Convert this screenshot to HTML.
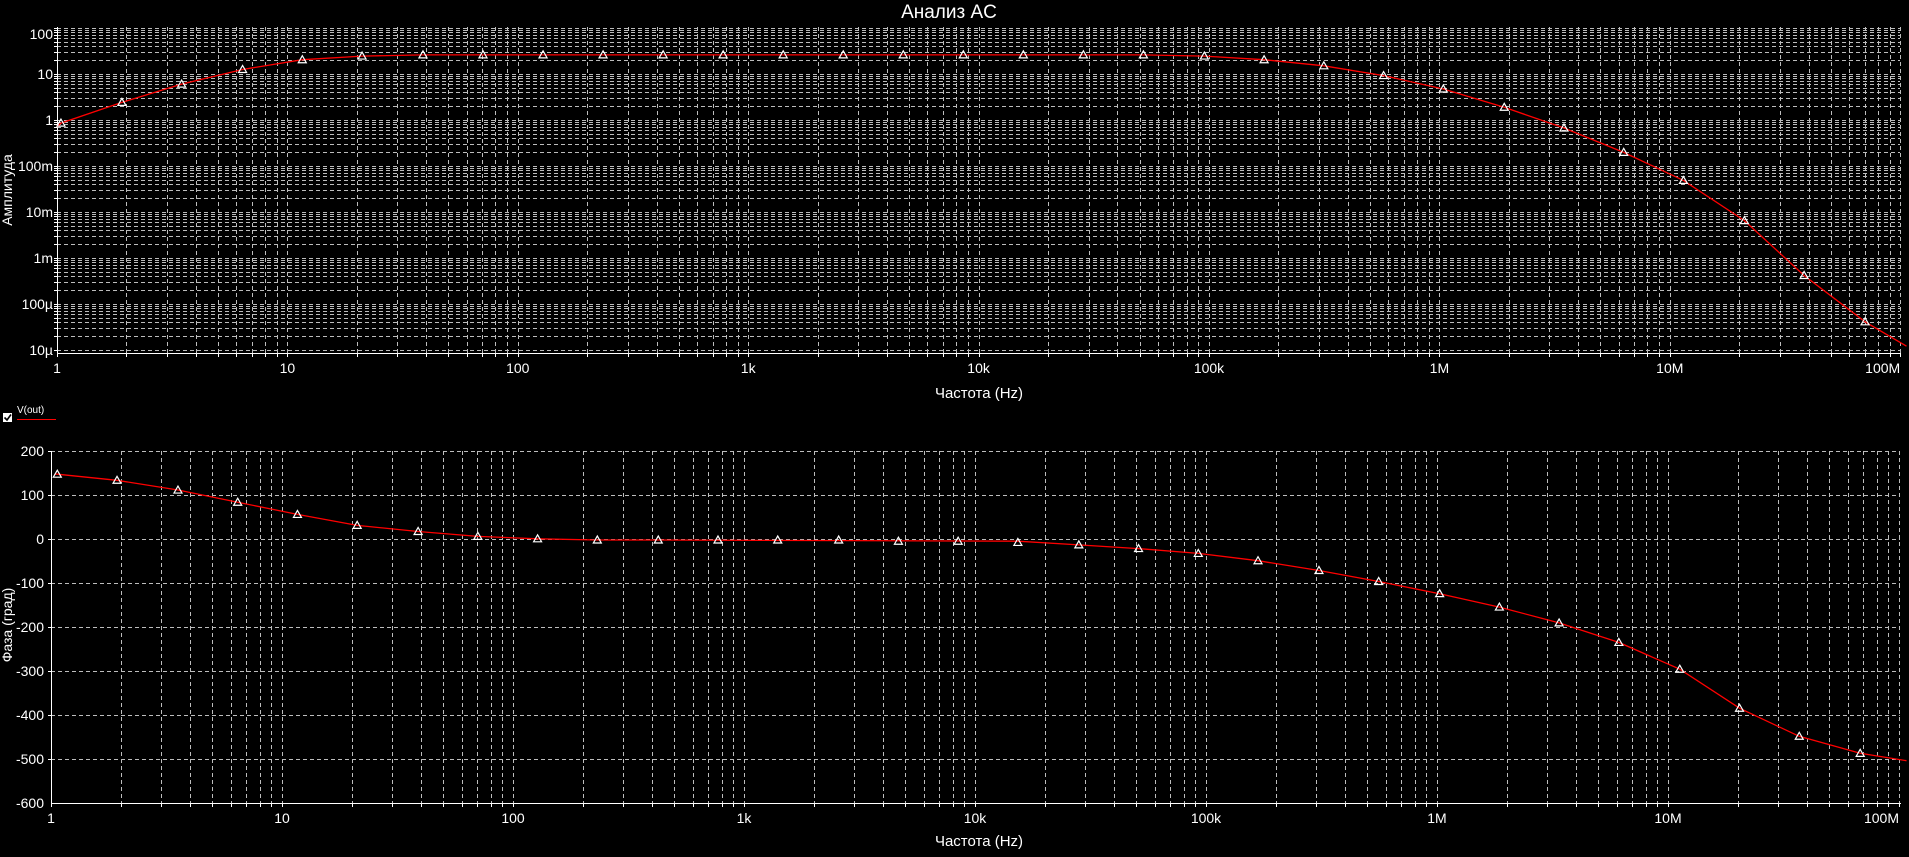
<!DOCTYPE html>
<html><head><meta charset="utf-8"><style>
html,body{margin:0;padding:0;background:#000;width:1909px;height:857px;overflow:hidden}
svg{display:block}
text{font-family:"Liberation Sans","DejaVu Sans",sans-serif;fill:#fff}
</style></head><body>
<svg id="s" width="1909" height="857" xmlns="http://www.w3.org/2000/svg">
<text x="949" y="18" font-size="19" text-anchor="middle">Анализ AC</text>
<text x="0" y="0" font-size="14" text-anchor="middle" transform="translate(12,190) rotate(-90)">Амплитуда</text>
<text x="0" y="0" font-size="14" text-anchor="middle" transform="translate(12,625) rotate(-90)">Фаза (град)</text>
<text x="979" y="398" font-size="15" text-anchor="middle">Частота (Hz)</text>
<text x="979" y="846" font-size="15" text-anchor="middle">Частота (Hz)</text>
<rect x="3" y="413" width="9" height="9" fill="#fff"/>
<path d="M4.5 417.5 L7 420 L11 414.5" stroke="#000" stroke-width="1.6" fill="none"/>
<text x="17" y="413" font-size="10">V(out)</text>
<line x1="17" y1="419.5" x2="56" y2="419.5" stroke="#f00" stroke-width="1"/>
<g id="g"></g>
</svg>
<script>
(function(){
var g=document.getElementById('g'),h='';
function L(x1,y1,x2,y2,c,d){h+='<line x1="'+x1+'" y1="'+y1+'" x2="'+x2+'" y2="'+y2+'" stroke="'+c+'" stroke-width="1"'+(d?' stroke-dasharray="4,3"':'')+'/>';}
function T(x,y,s,a,fs){h+='<text x="'+x+'" y="'+y+'" font-size="'+(fs||14)+'" text-anchor="'+a+'">'+s+'</text>';}
var xl=['1','10','100','1k','10k','100k','1M','10M','100M'];
var X0=57,D=230.4,TT=27,TB=353;
function ty(v){return 120-46*Math.log10(v);}
for(var e=-5;e<=2;e++)for(var k=1;k<=9;k++){var v=k*Math.pow(10,e);var y=Math.round(ty(v))+.5;if(y<TT||y>TB-1)continue;L(X0,y,1900,y,'#bdbdbd',1);L(X0-3,y,X0,y,'#fff');}
for(var e=0;e<=8;e++)for(var k=1;k<=9;k++){if(e==8&&k>1)break;var x=Math.round(X0+D*(e+Math.log10(k)))+.5;if(x>X0+1)L(x,TT,x,TB,'#bdbdbd',1);L(x,TB,x,TB+4,'#fff');}
var yl=['10µ','100µ','1m','10m','100m','1','10','100'];
for(var i=0;i<8;i++){var y=ty(Math.pow(10,i-5));T(X0-4,Math.max(y+5,39),yl[i],'end');}
for(var i=0;i<9;i++)T(X0+D*i,373,xl[i],i==8?'end':'middle');
L(X0+.5,TT,X0+.5,TB+1,'#fff');L(X0,TB+.5,1901,TB+.5,'#fff');
var B0=51,BD=231,BT=451,BB=803;
function by(v){return 539-0.44*v;}
for(var v=-500;v<=200;v+=100){var y=Math.round(by(v))+.5;L(B0,y,1900,y,'#bdbdbd',1);L(B0-3,y,B0,y,'#fff');}
for(var v=-600;v<=200;v+=100)T(B0-7,by(v)+5,String(v),'end');
for(var e=0;e<=8;e++)for(var k=1;k<=9;k++){if(e==8&&k>1)break;var x=Math.round(B0+BD*(e+Math.log10(k)))+.5;if(x>B0+1)L(x,BT,x,BB,'#bdbdbd',1);L(x,BB,x,BB+4,'#fff');}
for(var i=0;i<9;i++)T(B0+BD*i,823,xl[i],i==8?'end':'middle');
L(B0+.5,BT,B0+.5,BB+1,'#fff');L(B0,BB+.5,1901,BB+.5,'#fff');
var S=1.219;
var tc=[[47,104],[50,101],[100,84],[149,69],[199,57],[248,49],[297,46],[347,45],[938,45],[988,46],[1037,49],[1086,54],[1135,62],[1184,73],[1234,88],[1283,105],[1332,125],[1381,148],[1431,181],[1480,226],[1530,264],[1564,284]];
var bc=[[45,389],[47,389],[96,394],[146,402],[195,412],[244,422],[293,431],[343,436],[392,440],[441,442],[490,443],[540,443],[835,444],[885,447],[934,450],[983,454],[1032,460],[1082,468],[1131,477],[1181,487],[1230,498],[1279,511],[1328,527],[1378,549],[1427,581],[1476,604],[1526,618],[1564,624]];
function P(a){var s='';a.forEach(function(p){s+=(p[0]*S).toFixed(1)+','+(p[1]*S).toFixed(1)+' ';});h+='<polyline points="'+s+'" fill="none" stroke="#f00" stroke-width="1.3"/>';}
P(tc);P(bc);
function M(a){for(var i=0;i<a.length;i++){var x=a[i][0]*S,y=a[i][1]*S;h+='<path d="M'+(x-4)+' '+(y+3)+' L'+x+' '+(y-4)+' L'+(x+4)+' '+(y+3)+'Z" fill="none" stroke="#fff" stroke-width="1.2"/>';}}
var tm=[[50,101],[100,84],[149,69],[199,57],[248,49],[297,46]];
for(var x=347;x<=938;x+=49.25)tm.push([x,45]);
[[988,46],[1037,49],[1086,54],[1135,62],[1184,73],[1234,88],[1283,105],[1332,125],[1381,148],[1431,181],[1480,226],[1530,264]].forEach(function(p){tm.push(p)});
M(tm);
var bm=[[47,389],[96,394],[146,402],[195,412],[244,422],[293,431],[343,436],[392,440],[441,442],[490,443],[540,443],[589,443],[638,443],[688,443],[737,444],[786,444],[835,445],[885,447],[934,450],[983,454],[1032,460],[1082,468],[1131,477],[1181,487],[1230,498],[1279,511],[1328,527],[1378,549],[1427,581],[1476,604],[1526,618]];
M(bm);
g.innerHTML=h;
})();
</script>
</body></html>
